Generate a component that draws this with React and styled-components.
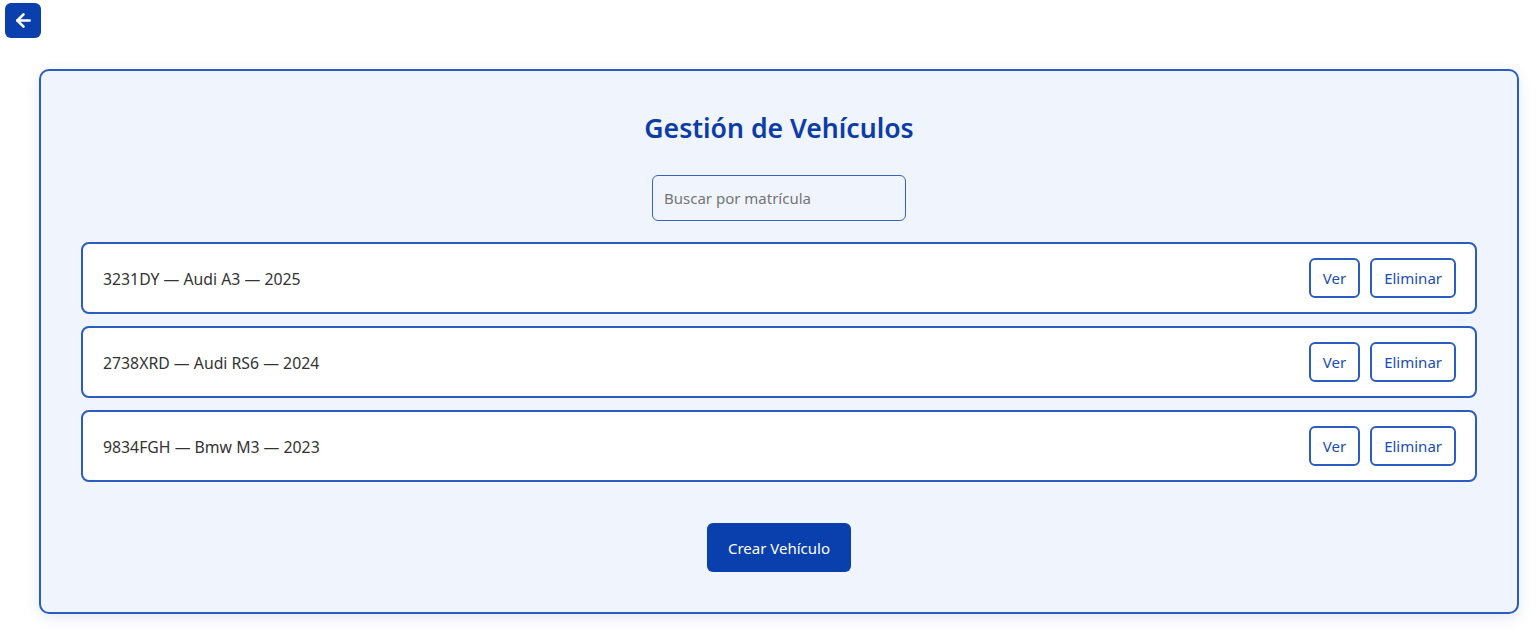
import React from "react";
import styled, { createGlobalStyle } from "styled-components";

const Global = createGlobalStyle`
  html, body { margin: 0; padding: 0; background: #ffffff; }
  body { font-family: "Noto Sans", "Open Sans", sans-serif; }
  * { box-sizing: border-box; }
`;

const Page = styled.div`
  padding: 3px 17px 24px 5px;
`;

const BackButton = styled.button`
  width: 36px;
  height: 35px;
  border: none;
  border-radius: 6px;
  background: #0a3fae;
  display: flex;
  align-items: center;
  justify-content: center;
  padding: 0;
  cursor: pointer;
`;

const Card = styled.main`
  margin: 31px 0 0 34px;
  border: 2px solid #2a5cc2;
  border-radius: 10px;
  background: #f0f4fc;
  box-shadow: 0 4px 14px rgba(30, 70, 170, 0.12);
  padding: 37px 40px 40px;
  display: flex;
  flex-direction: column;
  align-items: center;
`;

const Title = styled.h1`
  margin: 0;
  font-size: 26.6px;
  font-weight: 600;
  color: #0b3ca8;
  line-height: 40px;
`;

const Search = styled.input`
  margin-top: 27px;
  width: 254px;
  height: 46px;
  border: 1px solid #3563c4;
  border-radius: 6px;
  background: #f0f4fc;
  padding: 0 11px;
  font-family: inherit;
  font-size: 15px;
  color: #333;
  outline: none;
  &::placeholder { color: #757575; }
`;

const List = styled.div`
  margin-top: 21px;
  width: 100%;
  display: flex;
  flex-direction: column;
  gap: 12px;
`;

const Row = styled.div`
  height: 72px;
  border: 2px solid #2a5cc2;
  border-radius: 8px;
  background: #ffffff;
  display: flex;
  align-items: center;
  justify-content: space-between;
  padding: 0 20px;
`;

const RowText = styled.span`
  font-size: 15.8px;
  color: #333333;
  padding-top: 2px;
`;

const Actions = styled.div`
  display: flex;
  gap: 10px;
  margin-right: -1px;
`;

const OutlineButton = styled.button`
  height: 40px;
  padding: 0 12px;
  border: 2px solid #2a5cc2;
  border-radius: 6px;
  background: #ffffff;
  color: #1a4db5;
  font-family: inherit;
  font-size: 15px;
  cursor: pointer;
`;

const PrimaryButton = styled.button`
  margin-top: 41px;
  width: 144px;
  height: 49px;
  border: none;
  border-radius: 6px;
  background: #0a3fae;
  color: #ffffff;
  font-family: inherit;
  font-size: 15px;
  cursor: pointer;
`;

const vehicles = [
  { plate: "3231DY", model: "Audi A3", year: 2025 },
  { plate: "2738XRD", model: "Audi RS6", year: 2024 },
  { plate: "9834FGH", model: "Bmw M3", year: 2023 },
];

export default function App() {
  return (
    <>
      <Global />
      <Page>
        <BackButton aria-label="Volver">
          <svg width="21" height="21" viewBox="0 0 24 24" fill="none" stroke="#fff" strokeWidth="3" strokeLinecap="round" strokeLinejoin="round">
            <path d="M19 12H5" />
            <path d="M12 19l-7-7 7-7" />
          </svg>
        </BackButton>
        <Card>
          <Title>Gestión de Vehículos</Title>
          <Search placeholder="Buscar por matrícula" />
          <List>
            {vehicles.map((v) => (
              <Row key={v.plate}>
                <RowText>
                  {v.plate} — {v.model} — {v.year}
                </RowText>
                <Actions>
                  <OutlineButton>Ver</OutlineButton>
                  <OutlineButton>Eliminar</OutlineButton>
                </Actions>
              </Row>
            ))}
          </List>
          <PrimaryButton>Crear Vehículo</PrimaryButton>
        </Card>
      </Page>
    </>
  );
}
